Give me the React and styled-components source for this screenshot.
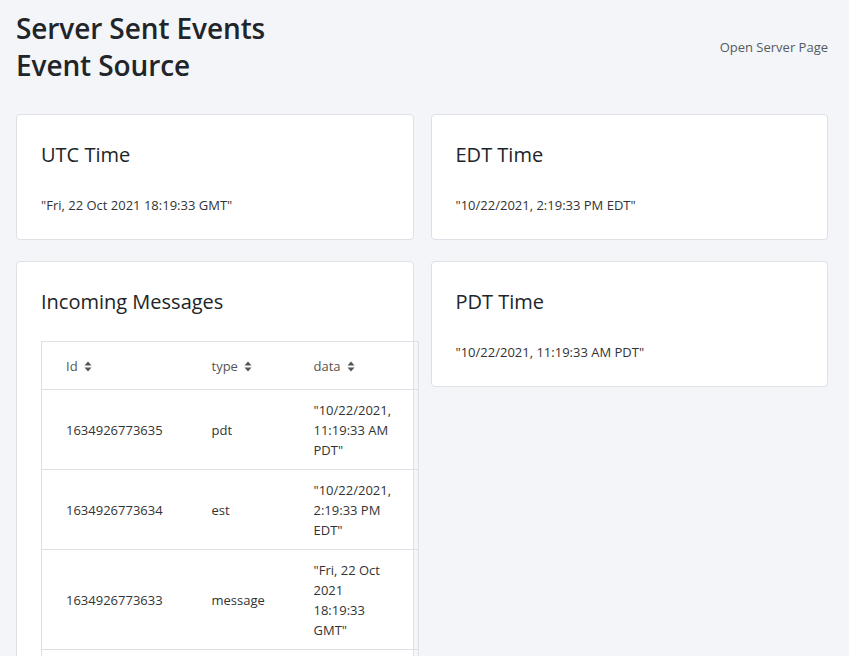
import React from 'react';
import styled, { createGlobalStyle } from 'styled-components';

const GlobalStyle = createGlobalStyle`
  body {
    margin: 0;
    background: #f3f5f8;
    font-family: "Open Sans", "Noto Sans", sans-serif;
    color: #212529;
  }
`

const Page = styled.div`
  padding: 10px 21px 40px 16px;
`
const Header = styled.header`
  display: flex;
  justify-content: space-between;
  align-items: flex-start;
  margin-bottom: 30px;
`
const Title = styled.h1`
  margin: 0;
  font-size: 28px;
  line-height: 37px;
  font-weight: 600;
  letter-spacing: -0.1px;
  color: #212529;
`
const ServerLink = styled.a`
  margin-top: 28px;
  font-size: 13px;
  line-height: 18px;
  color: #555b61;
  text-decoration: none;
  cursor: pointer;
`
const Grid = styled.div`
  display: grid;
  grid-template-columns: minmax(0, 1fr) minmax(0, 1fr);
  column-gap: 17px;
  row-gap: 21px;
  align-items: start;
`
const Card = styled.section`
  background: #fff;
  border: 1px solid #dde1e6;
  border-radius: 4px;
  padding: 24px;
  min-width: 0;
`
const CardTitle = styled.h2`
  margin: 0 0 ${p => (p.$tight ? 23 : 24)}px;
  font-size: 20px;
  line-height: 32px;
  font-weight: 400;
  color: #212529;
`
const CardValue = styled.div`
  font-size: 13px;
  line-height: 20px;
  color: #333;
`
const Table = styled.table`
  width: 377px;
  border-collapse: collapse;
  border: 1px solid #dde1e6;
  font-size: 13px;
  color: #333;
  table-layout: fixed;
`
const Th = styled.th`
  box-sizing: border-box;
  width: ${p => p.$w}px;
  text-align: left;
  font-weight: 400;
  color: #555;
  padding: 14px 24px 13px;
  line-height: 20px;
  border-bottom: 1px solid #dde1e6;
  white-space: nowrap;
`
const Td = styled.td`
  padding: 10px 24px 9px;
  line-height: 20px;
  vertical-align: middle;
  border-bottom: 1px solid #dde1e6;
`
const SortIcon = styled.svg`
  margin-left: 6px;
  vertical-align: -1px;
`

function Sort() {
  return (
    <SortIcon width="8" height="11" viewBox="0 0 8 11">
      <path d="M4 0.5 L7.5 4.5 H0.5 Z M4 10.5 L7.5 6.5 H0.5 Z" fill="#555" />
    </SortIcon>
  );
}

const messages = [
  { id: '1634926773635', type: 'pdt', data: '"10/22/2021, 11:19:33 AM PDT"' },
  { id: '1634926773634', type: 'est', data: '"10/22/2021, 2:19:33 PM EDT"' },
  { id: '1634926773633', type: 'message', data: '"Fri, 22 Oct 2021 18:19:33 GMT"' },
  { id: '1634926772631', type: 'pdt', data: '"10/22/2021, 11:19:32 AM PDT"' },
];

function App() {
  return (
    <Page>
      <GlobalStyle />
      <Header>
        <Title>Server Sent Events<br />Event Source</Title>
        <ServerLink>Open Server Page</ServerLink>
      </Header>
      <Grid>
        <Card>
          <CardTitle>UTC Time</CardTitle>
          <CardValue>"Fri, 22 Oct 2021 18:19:33 GMT"</CardValue>
        </Card>
        <Card>
          <CardTitle>EDT Time</CardTitle>
          <CardValue>"10/22/2021, 2:19:33 PM EDT"</CardValue>
        </Card>
        <Card>
          <CardTitle $tight>Incoming Messages</CardTitle>
          <Table>
            <thead>
              <tr>
                <Th $w={146}>Id<Sort /></Th>
                <Th $w={102}>type<Sort /></Th>
                <Th $w={129}>data<Sort /></Th>
              </tr>
            </thead>
            <tbody>
              {messages.map(m => (
                <tr key={m.id}>
                  <Td>{m.id}</Td>
                  <Td>{m.type}</Td>
                  <Td>{m.data}</Td>
                </tr>
              ))}
            </tbody>
          </Table>
        </Card>
        <Card>
          <CardTitle>PDT Time</CardTitle>
          <CardValue>"10/22/2021, 11:19:33 AM PDT"</CardValue>
        </Card>
      </Grid>
    </Page>
  );
}

export default App;
